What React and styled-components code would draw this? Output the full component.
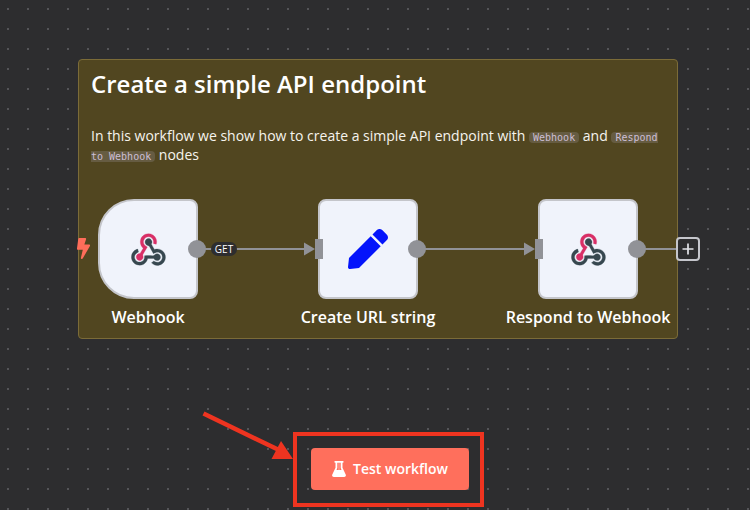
import React from "react";
import styled, { createGlobalStyle } from "styled-components";
import { FaBolt, FaPen } from "react-icons/fa";

const GlobalStyle = createGlobalStyle`
  * { box-sizing: border-box; }
  body { margin: 0; background: #2d2d2f; }
`;

const Canvas = styled.main`
  position: relative;
  width: 750px;
  height: 510px;
  overflow: hidden;
  background-color: #2d2d2f;
  background-image: radial-gradient(circle at 10px 10px, #5a5a5d 0.6px, transparent 1.5px);
  background-size: 20px 20px;
  background-position: -2px -1px;
  font-family: "Open Sans", "Noto Sans", sans-serif;
  color: #fff;
`;

const Sticky = styled.section`
  position: absolute;
  left: 78px;
  top: 59px;
  width: 600px;
  height: 280px;
  padding: 8px 12px;
  border: 1px solid #7b6b38;
  border-radius: 4px;
  background: #514620;
`;

const StickyTitle = styled.h2`
  margin: 0 0 26px;
  font-size: 24px;
  line-height: 32px;
  font-weight: 600;
  white-space: nowrap;
`;

const StickyText = styled.p`
  margin: 0;
  font-size: 14px;
  line-height: 19px;
  color: #f6f4ee;
`;

const Code = styled.code`
  padding: 0 4px;
  border-radius: 4px;
  background: #665c42;
  color: #cdbfd6;
  font-family: "DejaVu Sans Mono", monospace;
  font-size: 10px;
  line-height: 1;
`;

const Wires = styled.svg`
  position: absolute;
  inset: 0;
  pointer-events: none;
`;

const Node = styled.article`
  position: absolute;
  left: ${(p) => p.$x}px;
  top: 199px;
  width: 100px;
`;

const NodeBox = styled.div`
  display: flex;
  align-items: center;
  justify-content: center;
  height: 100px;
  border: 2px solid #c4c5ca;
  border-radius: ${(p) => (p.$trigger ? "36px 8px 8px 36px" : "8px")};
  background: #f0f3fb;
  color: #0414fb;
`;

const NodeName = styled.div`
  display: flex;
  justify-content: center;
  margin-top: 7px;
  font-size: 16px;
  line-height: 22px;
  font-weight: 600;
  white-space: nowrap;
`;

const TriggerBolt = styled(FaBolt)`
  position: absolute;
  left: -25px;
  top: 39px;
  color: #ff6d5a;
`;

const EdgeLabel = styled.span`
  position: absolute;
  left: 211px;
  top: 242px;
  width: 26px;
  height: 14px;
  border-radius: 7px;
  background: #2d2d2f;
  font-size: 10px;
  line-height: 14px;
  text-align: center;
`;

const AddButton = styled.button`
  position: absolute;
  left: 676px;
  top: 237px;
  display: flex;
  align-items: center;
  justify-content: center;
  width: 24px;
  height: 24px;
  padding: 0;
  border: 2px solid #c5c6cc;
  border-radius: 4px;
  background: #2d2d2f;
  color: #e4e5ea;
`;

const Highlight = styled.div`
  position: absolute;
  left: 293px;
  top: 432px;
  display: flex;
  align-items: center;
  justify-content: center;
  width: 191px;
  height: 75px;
  border: 4px solid #ee3420;
`;

const TestButton = styled.button`
  display: flex;
  align-items: center;
  justify-content: center;
  gap: 7px;
  width: 158px;
  height: 42px;
  padding: 0 0 0 1px;
  margin-top: -1px;
  margin-left: 2px;
  border: 0;
  border-radius: 4px;
  background: #ff6f5c;
  color: #fff;
  font: 600 14px/20px "Open Sans", sans-serif;
`;

function WebhookIcon() {
  return (
    <svg width="35" height="33" viewBox="-3 -3 262 245" strokeWidth="2" aria-hidden="true">
      <path fill="#d82f66" stroke="#d82f66" d="M119.54 100.503c-10.61 17.836-20.775 35.108-31.152 52.25-2.665 4.401-3.984 7.986-1.855 13.58 5.878 15.454-2.414 30.493-17.998 34.575-14.697 3.851-29.016-5.808-31.932-21.543-2.584-13.927 8.224-27.58 23.58-29.757 1.286-.184 2.6-.205 4.762-.367l23.358-39.168C73.612 95.465 64.868 78.39 66.803 57.23c1.368-14.957 7.25-27.883 18-38.477 20.59-20.288 52.002-23.573 76.246-8.001 23.284 14.958 33.948 44.094 24.858 69.031-6.854-1.858-13.756-3.732-21.343-5.79 2.854-13.865.743-26.315-8.608-36.981-6.178-7.042-14.106-10.733-23.12-12.093-18.072-2.73-35.815 8.88-41.08 26.618-5.976 20.13 3.069 36.575 27.784 48.967z" />
      <path fill="#37474f" stroke="#37474f" d="M149.841 79.41c7.475 13.187 15.065 26.573 22.587 39.836 38.02-11.763 66.686 9.284 76.97 31.817 12.422 27.219 3.93 59.457-20.465 76.25-25.04 17.238-56.707 14.293-78.892-7.851 5.654-4.733 11.336-9.487 17.407-14.566 21.912 14.192 41.077 13.524 55.305-3.282 12.133-14.337 11.87-35.714-.615-49.75-14.408-16.197-33.707-16.691-57.035-1.143-9.677-17.168-19.522-34.199-28.893-51.491-3.16-5.828-6.648-9.21-13.77-10.443-11.893-2.062-19.571-12.275-20.032-23.717-.453-11.316 6.214-21.545 16.634-25.53 10.322-3.949 22.435-.762 29.378 8.014 5.674 7.17 7.477 15.24 4.491 24.083-.83 2.466-1.905 4.852-3.07 7.774z" />
      <path fill="#37474f" stroke="#37474f" d="M167.707 187.21h-45.77c-4.387 18.044-13.863 32.612-30.19 41.876-12.693 7.2-26.373 9.641-40.933 7.29-26.808-4.323-48.728-28.456-50.658-55.63-2.184-30.784 18.975-58.147 47.178-64.293 1.947 7.071 3.915 14.21 5.862 21.264-25.876 13.202-34.832 29.836-27.59 50.636 6.375 18.304 24.484 28.337 44.147 24.457 20.08-3.962 30.204-20.65 28.968-47.432 19.036 0 38.088-.197 57.126.097 7.434.117 13.173-.654 18.773-7.208 9.22-10.784 26.191-9.811 36.121.374 10.148 10.409 9.662 27.157-1.077 37.127-10.361 9.62-26.73 9.106-36.424-1.26-1.992-2.136-3.562-4.673-5.533-7.298z" />
    </svg>
  );
}

function FlaskIcon() {
  return (
    <svg width="14" height="16" viewBox="0 0 14 16" aria-hidden="true">
      <path
        fill="currentColor"
        fillRule="evenodd"
        d="M3.200 0h7.600a.8.8 0 0 1 0 1.700H10.500v5L13.700 13.500c.6 1.200-.2 2.500-1.500 2.500H1.800C.5 16-.3 14.700.3 13.500L3.500 6.700v-5H3.200a.8.8 0 0 1 0-1.700ZM5.300 1.700V7L4.500 8.900h5L8.700 7V1.700Z"
      />
      <path fill="currentColor" opacity=".45" d="M6.500 1.700h1v7.200h-1z" />
    </svg>
  );
}

const nodes = [
  { name: "Webhook", x: 98, trigger: true, icon: <WebhookIcon /> },
  { name: "Create URL string", x: 318, icon: <FaPen size={40} /> },
  { name: "Respond to Webhook", x: 538, icon: <WebhookIcon /> },
];

export default function App() {
  return (
    <Canvas>
      <GlobalStyle />
      <Sticky>
        <StickyTitle>Create a simple API endpoint</StickyTitle>
        <StickyText>
          In this workflow we show how to create a simple API endpoint with <Code>Webhook</Code> and{" "}
          <Code>Respond to Webhook</Code> nodes
        </StickyText>
      </Sticky>
      {nodes.map((node) => (
        <Node key={node.name} $x={node.x}>
          {node.trigger && <TriggerBolt size={21} />}
          <NodeBox $trigger={node.trigger}>{node.icon}</NodeBox>
          <NodeName>{node.name}</NodeName>
        </Node>
      ))}
      <Wires width="750" height="510" aria-hidden="true">
        <g stroke="#919297" strokeWidth="2">
          <path d="M197 249H306M417 249H526M637 249H677" />
        </g>
        <g fill="#919297">
          <path d="M304 242.5L315 249L304 255.5Z" />
          <path d="M524 242.5L535 249L524 255.5Z" />
          <rect x="315" y="239" width="8" height="20" />
          <rect x="535" y="239" width="8" height="20" />
          <circle cx="197" cy="249" r="9" />
          <circle cx="417" cy="249" r="9" />
          <circle cx="637" cy="249" r="9" />
        </g>
        <path d="M203.500 413.500L279 450" stroke="#ee3420" strokeWidth="4.500" />
        <path d="M281 441L293 459L271.500 459Z" fill="#ee3420" />
      </Wires>
      <EdgeLabel>GET</EdgeLabel>
      <AddButton aria-label="Add node">
        <svg width="12" height="12" viewBox="0 0 12 12">
          <path d="M6 .5v11M.5 6h11" stroke="currentColor" strokeWidth="1.700" />
        </svg>
      </AddButton>
      <Highlight>
        <TestButton>
          <FlaskIcon />
          Test workflow
        </TestButton>
      </Highlight>
    </Canvas>
  );
}
